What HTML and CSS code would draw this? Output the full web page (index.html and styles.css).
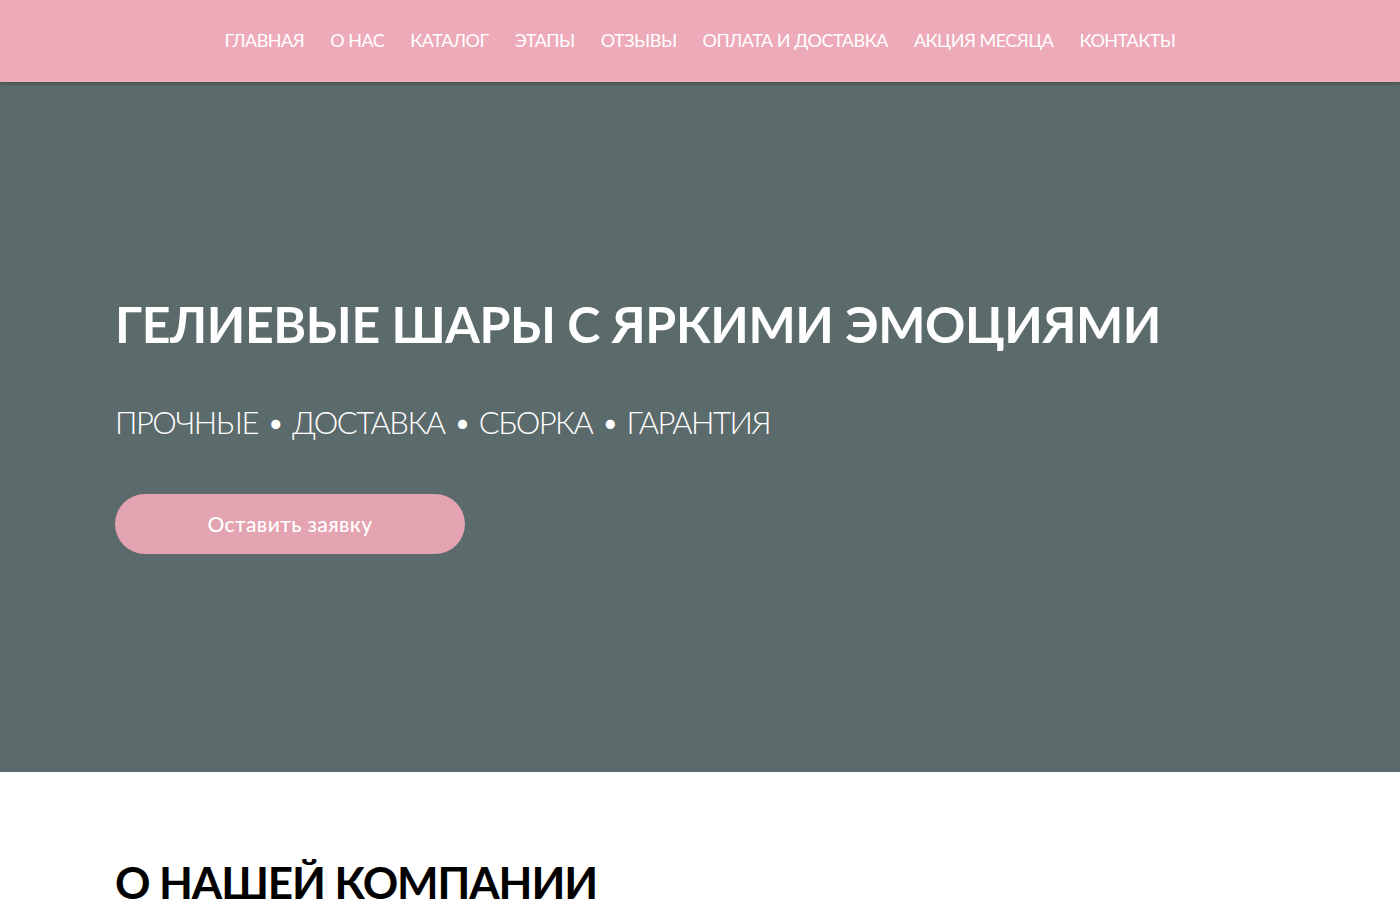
FILE: index.html
```html
<!DOCTYPE html>
<html lang="ru">
<head>
<meta charset="utf-8">
<title>Гелиевые шары</title>
<link rel="stylesheet" href="styles.css">
</head>
<body>
<header class="topbar">
  <nav class="menu">
    <a href="#">ГЛАВНАЯ</a>
    <a href="#">О НАС</a>
    <a href="#">КАТАЛОГ</a>
    <a href="#">ЭТАПЫ</a>
    <a href="#">ОТЗЫВЫ</a>
    <a href="#">ОПЛАТА И ДОСТАВКА</a>
    <a href="#">АКЦИЯ МЕСЯЦА</a>
    <a href="#">КОНТАКТЫ</a>
  </nav>
</header>
<section class="hero">
  <div class="container">
    <h1 class="hero-title">ГЕЛИЕВЫЕ ШАРЫ С ЯРКИМИ ЭМОЦИЯМИ</h1>
    <p class="hero-sub">ПРОЧНЫЕ • ДОСТАВКА • СБОРКА • ГАРАНТИЯ</p>
    <a class="btn" href="#">Оставить заявку</a>
  </div>
</section>
<section class="about">
  <div class="container">
    <h2 class="about-title">О НАШЕЙ КОМПАНИИ</h2>
  </div>
</section>
</body>
</html>
```
FILE: styles.css
```css
* { box-sizing: border-box; }
html, body { margin: 0; padding: 0; }
body {
  font-family: "Lato", "Noto Sans", sans-serif;
  background: #ffffff;
  color: #000;
  overflow: hidden;
  height: 900px;
}
.topbar {
  position: relative;
  z-index: 2;
  height: 82px;
  background: #edaab8;
  box-shadow: 0 2px 3px rgba(0,0,0,0.25);
  display: flex;
  align-items: center;
  justify-content: center;
}
.menu {
  display: flex;
  gap: 26px;
  padding-bottom: 2px;
}
.menu a {
  color: #ffffff;
  text-decoration: none;
  font-size: 18px;
  letter-spacing: -0.5px;
}
.hero {
  background: #5b6a6a;
  height: 690px;
  display: flex;
  align-items: center;
}
.container {
  width: 100%;
  padding: 0 115px;
}
.hero .container { padding-bottom: 2px; }
.hero-title {
  margin: 0;
  color: #fff;
  font-size: 50px;
  font-weight: 700;
  letter-spacing: -0.4px;
  line-height: 1;
}
.hero-sub {
  margin: 58px 0 0;
  color: #fff;
  font-size: 31px;
  font-weight: 300;
  letter-spacing: -1.5px;
  word-spacing: 2px;
  line-height: 1;
}
.btn {
  display: flex;
  align-items: center;
  justify-content: center;
  margin-top: 56px;
  width: 350px;
  height: 60px;
  border-radius: 30px;
  background: #e4a3b0;
  color: #fff;
  text-decoration: none;
  font-size: 21px;
  font-weight: 500;
  letter-spacing: 0.4px;
}
.about { padding-top: 86px; }
.about-title {
  margin: 0;
  font-size: 44px;
  font-weight: 700;
  letter-spacing: -1.1px;
  line-height: 1.1;
}
```
